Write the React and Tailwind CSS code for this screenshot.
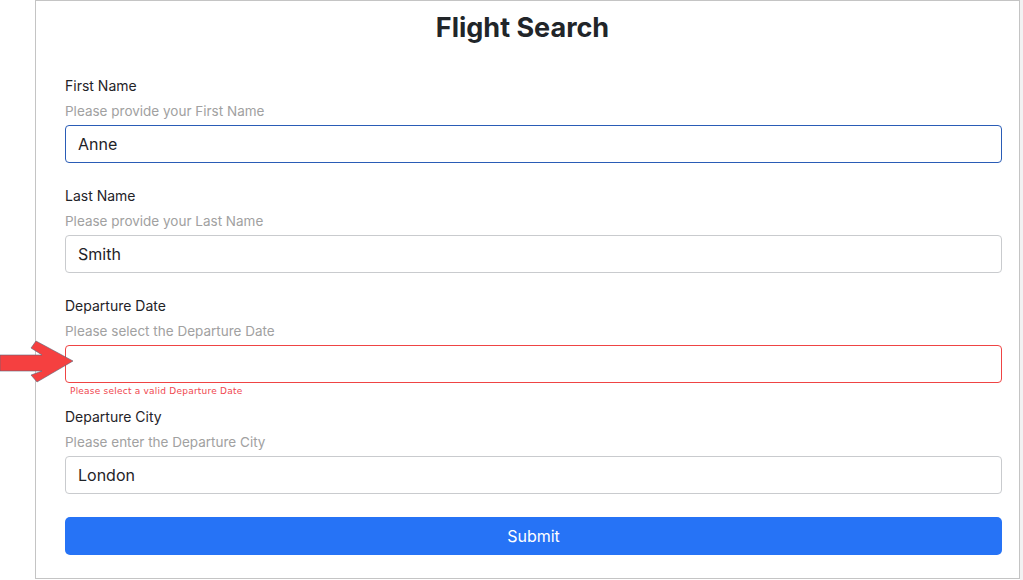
import React from 'react';

const FIELDS = [
  { label: 'First Name', help: 'Please provide your First Name', value: 'Anne', state: 'focus' },
  { label: 'Last Name', help: 'Please provide your Last Name', value: 'Smith', state: 'idle' },
  { label: 'Departure Date', help: 'Please select the Departure Date', value: '', state: 'error', error: 'Please select a valid Departure Date' },
  { label: 'Departure City', help: 'Please enter the Departure City', value: 'London', state: 'idle' },
];

const BORDERS = {
  focus: 'border-[#2a5cb6]',
  idle: 'border-[#c9cbce]',
  error: 'border-[#ef4444]',
};

function Field({ label, help, value, state, error }) {
  return (
    <div className={error ? 'mb-[10px]' : 'mb-[23px]'}>
      <label className="block text-[14px] leading-5 text-[#1f2328] mb-[5px]">{label}</label>
      <p className="text-[13.5px] leading-5 text-[#a1a1a1] mb-1">{help}</p>
      <input
        readOnly
        value={value}
        className={`block w-full h-[38px] rounded-[4px] border bg-white px-3 text-[16px] text-[#1f2328] outline-none ${BORDERS[state]}`}
      />
      {error && (
        <p className="mt-[2px] pl-[5px] h-3 text-[9px] leading-3 tracking-[0.22px] text-[#f0474f] font-['DejaVu_Sans',sans-serif]">{error}</p>
      )}
    </div>
  );
}

export default function App() {
  return (
    <div className="relative flex h-[580px] bg-white font-['Inter','Liberation_Sans',sans-serif] overflow-hidden">
      <div className="w-[35px] shrink-0" />

      <div className="w-[985px] h-[579px] shrink-0 border border-[#c4c4c4] bg-white pt-[10px] pl-[29px] pr-[17px]">
        <h1 className="text-[27px] leading-[34px] font-bold text-[#212529] text-center pr-[22px] mb-[31px]">Flight Search</h1>

        {FIELDS.map((f) => (
          <Field key={f.label} {...f} />
        ))}

        <button className="w-full h-[38px] rounded-[5px] bg-[#2673f6] text-white text-[16px]">Submit</button>
      </div>

      <div className="flex-1 bg-[#f2f2f2]" />

      {/* red pointer arrow */}
      <svg className="absolute left-0 top-[338px]" width="80" height="48" viewBox="0 0 80 48">
        <polygon
          points="0,17 42,17 31,10 36,3 73,23 37,44 31,37 42,33 0,33"
          fill="#f54040"
          stroke="#5a6678"
          strokeWidth="0.6"
        />
      </svg>
    </div>
  );
}
